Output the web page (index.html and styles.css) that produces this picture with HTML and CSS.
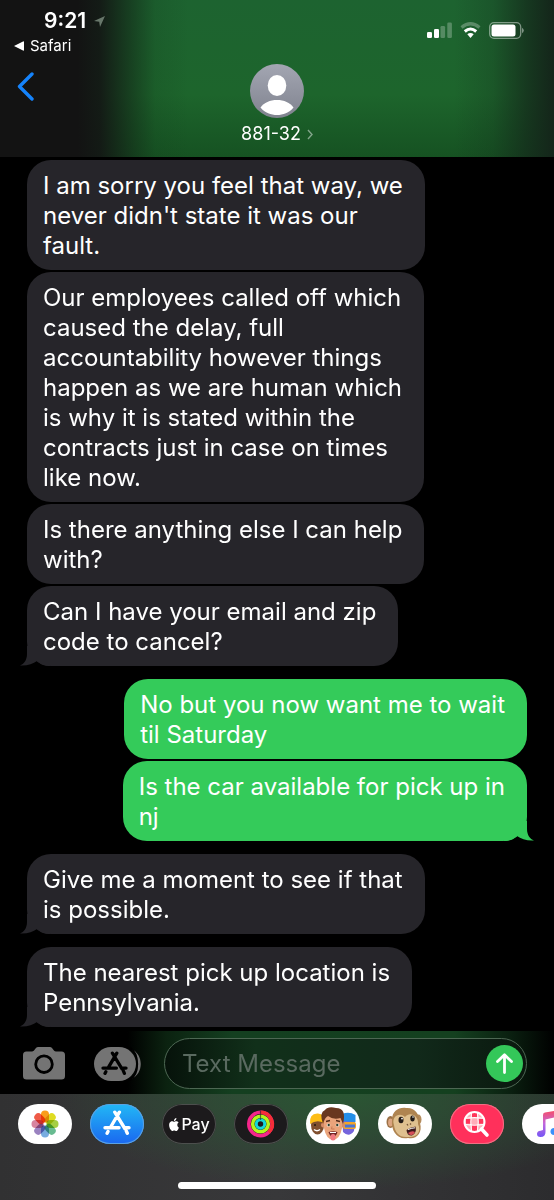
FILE: index.html
```html
<!DOCTYPE html>
<html lang="en">
<head>
<meta charset="utf-8">
<meta name="viewport" content="width=device-width, initial-scale=1">
<title>Messages</title>
<link rel="stylesheet" href="styles.css">
</head>
<body>
<svg class="defs" aria-hidden="true">
  <defs>
    <symbol id="tail" viewBox="0 0 30 20"><path d="M7 0V8C7 14 4 18 0 19.500C7 20 13 18 17 15C20 18 24 20 30 20V0Z"/></symbol>
    <symbol id="store-glyph" viewBox="0 0 28 26">
      <g fill="none" stroke="currentColor" stroke-width="3.400" stroke-linecap="round">
        <path d="M11.800 2.200 21.800 18.500M23.300 21l1 2.300M16.400 2.200 8 16.500M5 21.500l-.9 1.800M2 17.800h14M22.800 17.800H26"/>
      </g>
    </symbol>
  </defs>
</svg>
<div class="phone">
  <header class="top">
    <div class="status">
      <div class="status-left">
        <div class="clock"><span>9:21</span>
          <svg class="location" width="11" height="11" viewBox="0 0 11 11" aria-hidden="true"><path d="M11 0 6 11 5.200 5.800 0 5Z" fill="#68776b"/></svg>
        </div>
        <a class="return" href="#"><svg width="10" height="10" viewBox="0 0 10 10" aria-hidden="true"><path d="M0 5 9 .5Q10 0 10 1V9Q10 10 9 9.500Z" fill="#fff"/></svg>Safari</a>
      </div>
      <div class="indicators" aria-hidden="true">
        <svg width="25" height="17" viewBox="0 0 25 17"><g fill="#fff"><rect y="10" width="5" height="6" rx="1.300"/><rect x="7" y="7" width="5" height="9" rx="1.300"/></g><g fill="#fff" opacity=".25"><rect x="13.500" y="4" width="4.600" height="12" rx="1.300"/><rect x="20.300" y=".5" width="4.600" height="15.500" rx="1.300"/></g></svg>
        <svg width="21" height="17" viewBox="0 0 21 17"><path d="M1.500 5.500Q10.500-2 19.500 5.500" fill="none" stroke="#fff" stroke-opacity=".28" stroke-width="3.200"/><path d="M4.800 9.500Q10.500 4.500 16.200 9.500" fill="none" stroke="#fff" stroke-width="3"/><path d="M7.300 12.200Q10.500 9.600 13.700 12.200L10.500 16Z" fill="#fff"/></svg>
        <svg width="35" height="17" viewBox="0 0 35 17"><rect x=".7" y=".7" width="31" height="15.600" rx="4.300" fill="none" stroke="#fff" stroke-opacity=".45" stroke-width="1.300"/><rect x="2.500" y="2.500" width="24" height="12" rx="2.500" fill="#fff"/><path d="M33 5.800Q34.800 6.700 34.800 8.500T33 11.200Z" fill="#fff" fill-opacity=".45"/></svg>
      </div>
    </div>
    <nav class="nav">
      <button class="back" aria-label="Back"><svg width="17" height="29" viewBox="0 0 17 29"><path d="M15 2 2.500 14.500 15 27" fill="none" stroke="#1583fb" stroke-width="3.400" stroke-linecap="round" stroke-linejoin="round"/></svg></button>
      <button class="contact">
        <svg width="54" height="54" viewBox="0 0 54 54" aria-hidden="true"><defs><linearGradient id="av" x2="0" y2="1"><stop stop-color="#a3a6b2"/><stop offset="1" stop-color="#80838f"/></linearGradient><clipPath id="avc"><circle cx="27" cy="27" r="25"/></clipPath></defs><circle cx="27" cy="27" r="27" fill="url(#av)"/><g fill="#fff"><ellipse cx="27" cy="21.500" rx="9.300" ry="10.500"/><path clip-path="url(#avc)" d="M10.500 43.500C14 38.500 20 36 27 36S40 38.500 43.500 43.500C39 49 33 51 27 51S15 49 10.500 43.500Z"/></g></svg>
        <span class="contact-name">881-32<svg width="6" height="11" viewBox="0 0 6 11" aria-hidden="true"><path d="M1 1 5 5.500 1 10" fill="none" stroke="#83a58b" stroke-width="1.400"/></svg></span>
      </button>
      <span></span>
    </nav>
  </header>

  <main class="thread">
    <section class="group received">
      <p class="bubble">I am sorry you feel that way, we<br>never didn't state it was our<br>fault.</p>
      <p class="bubble">Our employees called off which<br>caused the delay, full<br>accountability however things<br>happen as we are human which<br>is why it is stated within the<br>contracts just in case on times<br>like now.</p>
      <p class="bubble">Is there anything else I can help<br>with?</p>
      <p class="bubble">Can I have your email and zip<br>code to cancel?<svg class="tail" aria-hidden="true"><use href="#tail"/></svg></p>
    </section>
    <section class="group sent">
      <p class="bubble">No but you now want me to wait<br>til Saturday</p>
      <p class="bubble">Is the car available for pick up in<br>nj<svg class="tail" aria-hidden="true"><use href="#tail"/></svg></p>
    </section>
    <section class="group received">
      <p class="bubble">Give me a moment to see if that<br>is possible.<svg class="tail" aria-hidden="true"><use href="#tail"/></svg></p>
    </section>
    <section class="group received">
      <p class="bubble">The nearest pick up location is<br>Pennsylvania.<svg class="tail" aria-hidden="true"><use href="#tail"/></svg></p>
    </section>
  </main>

  <form class="composer">
    <button type="button" class="tool" aria-label="Camera"><svg width="42" height="33" viewBox="0 0 42 33"><path fill-rule="evenodd" fill="#747474" d="M3.500 4.500H9C12 4.500 12 0 15 0H27C30 0 30 4.500 33 4.500H38.500Q42 4.500 42 8V29Q42 32.500 38.500 32.500H3.500Q0 32.500 0 29V8Q0 4.500 3.500 4.500ZM21 7.500A9.700 9.700 0 1 0 21 26.900A9.700 9.700 0 1 0 21 7.500ZM21 10.300A6.900 6.900 0 1 1 21 24.100A6.900 6.900 0 1 1 21 10.300Z"/></svg></button>
    <button type="button" class="tool apps" aria-label="Apps"><svg width="47" height="34" viewBox="0 0 47 34"><rect width="42" height="34" rx="17" fill="#747474"/><path d="M37 2C50 7 50 27 37 32C46 25 46 9 37 2Z" fill="#747474"/><path d="M35 .5C46 6 46 28 35 33.500" fill="none" stroke="#000" stroke-width="1.800"/><use href="#store-glyph" x="7" y="4" width="27" height="25" color="#000"/></svg></button>
    <div class="field">
      <input type="text" aria-label="Message" placeholder="Text Message">
      <button type="button" class="send" aria-label="Send"><svg width="17" height="21" viewBox="0 0 17 21"><path d="M8.500 19.500V2M1.500 8.500 8.500 1.800 15.500 8.500" fill="none" stroke="#fff" stroke-width="2.800" stroke-linecap="round" stroke-linejoin="round"/></svg></button>
    </div>
  </form>

  <footer class="drawer">
    <div class="app-strip">
      <button class="app white" aria-label="Photos"><svg viewBox="0 0 54 40"><g class="petals" transform="translate(27 20)">
        <rect x="-4" y="-13.500" width="8" height="12" rx="4" fill="#f99d1c"/>
        <rect x="-4" y="-13.500" width="8" height="12" rx="4" fill="#dfdc22" transform="rotate(45)"/>
        <rect x="-4" y="-13.500" width="8" height="12" rx="4" fill="#a5ce43" transform="rotate(90)"/>
        <rect x="-4" y="-13.500" width="8" height="12" rx="4" fill="#68bb91" transform="rotate(135)"/>
        <rect x="-4" y="-13.500" width="8" height="12" rx="4" fill="#78ace0" transform="rotate(180)"/>
        <rect x="-4" y="-13.500" width="8" height="12" rx="4" fill="#9a82c0" transform="rotate(225)"/>
        <rect x="-4" y="-13.500" width="8" height="12" rx="4" fill="#d7849f" transform="rotate(270)"/>
        <rect x="-4" y="-13.500" width="8" height="12" rx="4" fill="#ef5b48" transform="rotate(315)"/></g></svg></button>
      <button class="app store" aria-label="App Store"><svg viewBox="0 0 54 40"><use href="#store-glyph" x="13" y="6" width="28" height="26" color="#fff"/></svg></button>
      <button class="app dark pay" aria-label="Apple Pay"><svg width="12" height="13" viewBox="0 0 24 24" preserveAspectRatio="none" aria-hidden="true"><path fill="#fff" d="M12.152 6.896c-.948 0-2.415-1.078-3.960-1.040-2.040.027-3.910 1.183-4.961 3.014-2.117 3.675-.546 9.103 1.519 12.090 1.013 1.454 2.208 3.090 3.792 3.039 1.520-.065 2.090-.987 3.935-.987 1.831 0 2.350.987 3.960.948 1.637-.026 2.676-1.480 3.676-2.948 1.156-1.688 1.636-3.325 1.662-3.415-.039-.013-3.182-1.221-3.220-4.857-.026-3.040 2.480-4.494 2.597-4.559-1.429-2.090-3.623-2.324-4.390-2.376-2-.156-3.675 1.090-4.610 1.090zM15.530 3.830c.843-1.012 1.400-2.427 1.245-3.830-1.207.052-2.662.805-3.532 1.818-.780.896-1.454 2.338-1.273 3.714 1.338.104 2.715-.688 3.559-1.701"/></svg><span>Pay</span></button>
      <button class="app dark" aria-label="Activity"><svg viewBox="0 0 54 40"><g fill="none" stroke-width="3.600"><circle cx="26.500" cy="20" r="11.700" stroke="#f5258a"/><path d="M26.500 8.300A11.700 11.700 0 0 1 34.800 28.300" stroke="#f62e38"/><circle cx="26.500" cy="20" r="7.800" stroke="#b4f51d"/><circle cx="26.500" cy="20" r="4.200" stroke="#16d8d9" stroke-width="3"/><path d="M26.500 6.500V16" stroke="#241a20" stroke-width="1.200" opacity=".6"/></g></svg></button>
      <button class="app white" aria-label="Memoji"><svg viewBox="0 0 54 40">
        <ellipse cx="11.500" cy="21" rx="6.500" ry="9.500" fill="#80502f"/><path d="M4 20Q3 9 12 9.500Q19 10 18 19Q11 15 4 20Z" fill="#fdbd16"/><circle cx="9" cy="21" r="1" fill="#26180e"/><path d="M8 25.500Q11 28 14 25.500" stroke="#fff" stroke-width="1.500" fill="none"/>
        <path d="M36 14Q37 9 44 9.500Q50 10 49 18L48 27Q43 34 37 28Z" fill="#7565dc"/><path d="M36 17V10Q43 7 49.500 11V18Z" fill="#258ee8"/><rect x="37" y="18" width="13" height="7" rx="2" fill="#f2a52b"/><path d="M39 22H49" stroke="#4b75d5" stroke-width="3"/>
        <circle cx="17.500" cy="21" r="2.500" fill="#d78c65"/><circle cx="36.500" cy="21" r="2.500" fill="#d78c65"/><path d="M18 12Q27 8 36 12L36 24Q34 35 27 36Q20 35 18 24Z" fill="#eaa47b"/><path d="M17 20Q13 8 19 6Q22 2 30 4Q41 4 37 20L34.500 14Q27 16 22 12Q19 13 17 20Z" fill="#68371f"/><path d="M20 17.500l4-1M30 16.500l4 1" stroke="#512b19" stroke-width="1.400"/><ellipse cx="22.500" cy="21" rx="1.800" ry="1.600" fill="#fff"/><ellipse cx="31.500" cy="21" rx="1.800" ry="1.600" fill="#fff"/><circle cx="22.700" cy="21" r="1.200" fill="#2f3d28"/><circle cx="31.300" cy="21" r="1.200" fill="#2f3d28"/><path d="M26 22.500L25.500 25H28.500" stroke="#c77955" fill="none"/><path d="M22.500 28Q27 26.500 31.500 28Q30 33 27 33Q24 33 22.500 28Z" fill="#702625"/><path d="M24 28.500H30" stroke="#fff"/><rect x="24.500" y="30" width="5" height="6.500" rx="2.500" fill="#ef7881"/></svg></button>
      <button class="app white" aria-label="Animoji"><svg viewBox="0 0 54 40"><ellipse cx="12.500" cy="18" rx="4" ry="6" fill="#9b7146"/><ellipse cx="12.500" cy="18.500" rx="2.400" ry="4" fill="#dca581"/><ellipse cx="40.500" cy="15.500" rx="3" ry="5" fill="#b48b5c"/><path d="M14 16C14 7 21 3 28 4C37 3 42 11 42 19C45 29 38 36 30 34C19 36 13 27 14 16Z" fill="#af8450"/><path d="M16 21C13 12 22 8 27 13C32 7 41 12 40 20C44 28 38 34 30 33C21 34 17 28 16 21Z" fill="#dfc08f"/><ellipse cx="23" cy="16" rx="2.500" ry="3.200" fill="#231b17"/><ellipse cx="34.500" cy="14.500" rx="2.200" ry="3" fill="#231b17"/><circle cx="24" cy="14.600" r=".9" fill="#fff"/><circle cx="35" cy="13" r=".8" fill="#fff"/><path d="M29 20l1 1.500M32 19.500l1 1" stroke="#725136" stroke-width="1.300"/><path d="M28.500 26Q32 23 37.500 22.500Q39 29 34 31.500Q29 32 28.500 26Z" fill="#3d191b"/><path d="M30 25.500Q34 24 37 23.800" stroke="#fff" stroke-width="1"/><path d="M30 29Q34 26 37 28Q36 31 33.500 31.200Q31 31 30 29Z" fill="#d54f58"/></svg></button>
      <button class="app pink" aria-label="Images"><svg viewBox="0 0 54 40"><circle cx="24.500" cy="18" r="9.500" fill="#ffadb9"/><g fill="#ff365b"><path d="M22 9h5v5h-5zM16 14.800h5v5h-5zM28.500 14.800h5v5h-5zM22 21h5v6h-5z"/></g><g fill="none" stroke="#fff"><path d="M21.500 9Q20 18 21.500 27M27.500 9Q29 18 27.500 27M16 14.300Q24.500 13 33 14.300M16 20.500Q24.500 22 33 20.500" stroke-width="1.100"/><circle cx="24.500" cy="18" r="10" stroke-width="2"/></g><path d="M31.500 25 37 31" stroke="#fff" stroke-width="3.600" stroke-linecap="round"/></svg></button>
      <button class="app white" aria-label="Music"><svg viewBox="0 0 54 40"><defs><linearGradient id="note" x2="0" y2="1"><stop stop-color="#f94c62"/><stop offset=".5" stop-color="#c268dc"/><stop offset="1" stop-color="#7456f5"/></linearGradient></defs><path fill="url(#note)" d="M21 11Q21 9 23 8.600L37 6V26H34.500V13L23.500 15.500V28Q23.500 33 18.500 33Q15 33 15 30Q15 27 18.500 26.700L21 26Z"/><ellipse cx="32.500" cy="27.500" rx="4" ry="3.500" fill="#3990fb"/></svg></button>
    </div>
    <div class="home-indicator"></div>
  </footer>
</div>
</body>
</html>
```

FILE: styles.css
```css
* { box-sizing: border-box; }
body {
  margin: 0;
  background: #000;
  color: #fff;
  font-family: Inter, "Liberation Sans", sans-serif;
}
button {
  padding: 0;
  border: 0;
  background: none;
  color: inherit;
  font: inherit;
}
svg { display: block; flex: none; }
.defs { position: absolute; width: 0; height: 0; }
.phone {
  display: flex;
  flex-direction: column;
  min-height: 100vh;
  overflow: hidden;
}

/* Header */
.top {
  padding-bottom: 12px;
  background:
    linear-gradient(90deg, #131313 14%, rgba(19, 21, 20, 0.920) 18%, rgba(19, 40, 24, 0.550) 24%, rgba(20, 62, 30, 0.200) 28%, transparent 34%, transparent 82%, rgba(20, 45, 28, 0.250) 89%, rgba(20, 42, 27, 0.750) 95%, #14251a),
    linear-gradient(#1d6330, #1d652c 60%, #165222);
}
.status {
  display: flex;
  justify-content: space-between;
  padding: 10px 30px 0 14px;
  height: 64px;
}
.clock {
  display: flex;
  align-items: center;
  gap: 8px;
  padding-left: 30px;
  font-size: 21px;
  line-height: 22px;
  font-weight: 600;
}
.return {
  display: flex;
  align-items: center;
  gap: 6px;
  margin-top: 4px;
  color: #fff;
  font-size: 15px;
  line-height: 20px;
  text-decoration: none;
}
.indicators {
  display: flex;
  align-items: flex-start;
  gap: 8px;
  padding-top: 12px;
}
.nav {
  display: grid;
  grid-template-columns: 1fr auto 1fr;
  align-items: start;
}
.back { justify-self: start; margin: 8px 0 0 17px; }
.contact {
  display: flex;
  flex-direction: column;
  align-items: center;
  gap: 5px;
}
.contact-name {
  display: flex;
  align-items: center;
  gap: 6px;
  font-size: 18px;
  line-height: 22px;
}

/* Conversation */
.thread {
  flex: 1;
  display: flex;
  flex-direction: column;
  gap: 13px;
  padding: 3px 27px 4px;
}
.group {
  display: flex;
  flex-direction: column;
  align-items: flex-start;
  gap: 2px;
}
.sent { align-items: flex-end; }
.bubble {
  position: relative;
  isolation: isolate;
  margin: 0;
  padding: 11px 22px 9px 16px;
  border-radius: 24px;
  background: #26252a;
  font-size: 24px;
  line-height: 30px;
}
.sent .bubble { background: #34cb5a; }
.tail {
  position: absolute;
  z-index: -1;
  left: -7px;
  bottom: 0;
  width: 30px;
  height: 20px;
  fill: #26252a;
}
.sent .tail {
  left: auto;
  right: -7px;
  fill: #34cb5a;
  transform: scaleX(-1);
}

/* Composer */
.composer {
  display: flex;
  align-items: center;
  padding: 7px 27px 5px 23px;
  background: linear-gradient(90deg, #000 23%, #0b2210 30%, #143f20 42%, #14401f 82%, #0a2010 92%, #000);
}
.apps { margin-left: 29px; }
.field {
  flex: 1;
  min-width: 0;
  display: flex;
  align-items: center;
  margin-left: 23px;
  padding: 0 3px 0 17px;
  height: 51px;
  border: 1px solid #4d6753;
  border-radius: 26px;
  background: linear-gradient(90deg, #06120a, #11301a 25%, #11291a 70%, #0a180e);
}
.field input {
  flex: 1;
  min-width: 0;
  padding: 0;
  border: 0;
  outline: 0;
  background: none;
  color: #fff;
  font: inherit;
  font-size: 24px;
  line-height: 30px;
}
.field input::placeholder { color: #5a6a60; opacity: 1; }
.send {
  display: grid;
  place-items: center;
  width: 37px;
  height: 37px;
  border-radius: 50%;
  background: #34c759;
}

/* App drawer */
.drawer {
  padding-top: 10px;
  padding-bottom: 11px;
  background:
    radial-gradient(ellipse 52% 90% at 62% 0, #2a5633, rgba(42, 86, 51, 0.600) 45%, transparent),
    linear-gradient(90deg, #313132, #38383a 50%, #2c2c2e);
}
.app-strip {
  display: flex;
  gap: 18px;
  padding-left: 18px;
  overflow: hidden;
}
.app {
  flex: none;
  width: 54px;
  height: 40px;
  border-radius: 20px;
  overflow: hidden;
}
.app.white { background: #fff; }
.app.dark { background: #1c1a1c; box-shadow: inset 0 0 0 1px #4c4f4d; }
.app.store { background: linear-gradient(#22b8f5, #1a67f0); box-shadow: inset 0 0 0 1px #5ba2e3; }
.app.pink { background: #ff305b; box-shadow: inset 0 0 0 1px #f17084; }
.pay {
  display: flex;
  align-items: center;
  justify-content: center;
  gap: 1px;
  font-size: 16px;
  font-weight: 500;
}
.petals rect { mix-blend-mode: multiply; }
.home-indicator {
  width: 198px;
  height: 7px;
  margin: 38px auto 0;
  border-radius: 4px;
  background: #fff;
}
```
